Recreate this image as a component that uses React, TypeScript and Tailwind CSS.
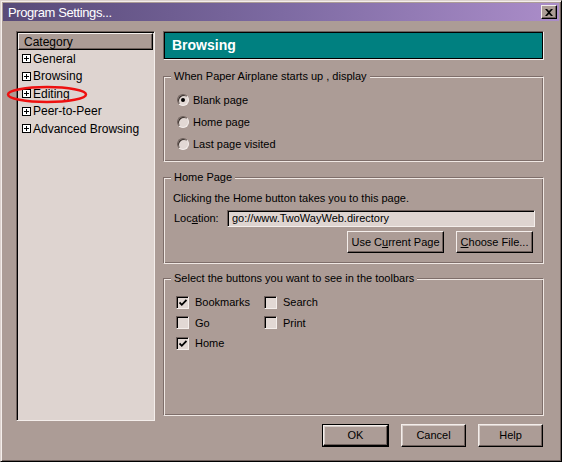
import * as React from 'react';

const FACE = 'bg-[#ac9c96]';

function Radio({ checked, label }: { checked?: boolean; label: string }) {
  return (
    <div className="flex items-center h-[22px]">
      <div className="relative w-[12px] h-[12px] rounded-full border border-t-[#6e605c] border-l-[#6e605c] border-r-[#f4eeeb] border-b-[#f4eeeb] bg-[#e2d8d4] shadow-[inset_1px_1px_0_#3a302c]">
        {checked && <div className="absolute left-[3px] top-[3px] w-[4px] h-[4px] rounded-full bg-black" />}
      </div>
      <span className="ml-[4px]">{label}</span>
    </div>
  );
}

function Check({ checked, label }: { checked?: boolean; label: string }) {
  return (
    <div className="flex items-center h-[20.5px]">
      <div className="relative w-[13px] h-[13px] border border-t-[#6e605c] border-l-[#6e605c] border-r-[#f4eeeb] border-b-[#f4eeeb] bg-[#e2d8d4] shadow-[inset_1px_1px_0_#000]">
        {checked && (
          <svg className="absolute left-[2px] top-[2px]" width="8" height="8" viewBox="0 0 8 8">
            <polyline points="0.5,3.5 2.8,5.8 7.5,1" fill="none" stroke="#000" strokeWidth="1.8" />
          </svg>
        )}
      </div>
      <span className="ml-[6px]">{label}</span>
    </div>
  );
}

function Btn({ children, w, isDefault }: { children: React.ReactNode; w: string; isDefault?: boolean }) {
  const inner = (
    <div
      className={`${w} h-full flex items-center justify-center border border-t-[#f4eeeb] border-l-[#f4eeeb] border-r-black border-b-black shadow-[inset_-1px_-1px_0_#6e605c,inset_1px_1px_0_#d6ccc8] ${FACE}`}
    >
      {children}
    </div>
  );
  if (isDefault) return <div className="h-[23px] border border-black">{inner}</div>;
  return <div className="h-[23px]">{inner}</div>;
}

function Group({ legend, className, children }: { legend: string; className: string; children: React.ReactNode }) {
  return (
    <div
      className={`relative border border-t-[#7e6e6a] border-l-[#7e6e6a] border-r-[#f0e8e4] border-b-[#f0e8e4] shadow-[inset_1px_1px_0_#f0e8e4,inset_-1px_-1px_0_#7e6e6a] ${className}`}
    >
      <span className={`absolute left-[7px] top-[-7px] px-[3px] leading-[13px] ${FACE}`}>{legend}</span>
      {children}
    </div>
  );
}

function Plus() {
  return (
    <div className="relative w-[9px] h-[9px] border border-black bg-white">
      <div className="absolute left-[1px] top-[3px] w-[5px] h-[1px] bg-black" />
      <div className="absolute left-[3px] top-[1px] w-[1px] h-[5px] bg-black" />
    </div>
  );
}

const categories = ['General', 'Browsing', 'Editing', 'Peer-to-Peer', 'Advanced Browsing'];

export default function App() {
  return (
    <div
      className={`relative w-[562px] h-[462px] overflow-hidden ${FACE} border border-t-[#dcd2ce] border-l-[#dcd2ce] border-r-black border-b-black shadow-[inset_1px_1px_0_#f4eeeb,inset_-1px_-1px_0_#6e605c] text-black`}
      style={{ fontFamily: '"Liberation Sans", Arial, sans-serif' }}
    >
      {/* Title bar */}
      <div className="mx-[2px] mt-[2px] h-[18px] flex items-center bg-gradient-to-r from-[#584a78] via-[#7d6aa2] to-[#ab8dc9]">
        <span className="pl-[5px] text-[13px] tracking-[-0.4px] text-white leading-none">Program Settings...</span>
        <div className="ml-auto mr-[2px] w-[16px] h-[14px] flex items-center justify-center border border-t-[#f4eeeb] border-l-[#f4eeeb] border-r-black border-b-black shadow-[inset_-1px_-1px_0_#6e605c] bg-[#ac9c96]">
          <svg width="8" height="7" viewBox="0 0 8 7">
            <path d="M0 0 L2 0 L4 2 L6 0 L8 0 L5 3.5 L8 7 L6 7 L4 5 L2 7 L0 7 L3 3.5 Z" fill="#000" />
          </svg>
        </div>
      </div>

      {/* Body */}
      <div className="flex pl-[15px] mt-[10px]">
        {/* Category list */}
        <div className="w-[139px] h-[390px] border border-t-[#6e605c] border-l-[#6e605c] border-r-[#f4eeeb] border-b-[#f4eeeb] bg-[#ded4d0] shadow-[inset_1px_1px_0_#000] pl-[1px] pt-[1px]">
          <div className="h-[17px] flex items-center pl-[5px] text-[12px] border border-t-[#f4eeeb] border-l-[#f4eeeb] border-r-black border-b-black shadow-[inset_-1px_-1px_0_#6e605c] bg-[#ac9c96] mr-[1px]">
            Category
          </div>
          <div className="pl-[4px] text-[12px]">
            {categories.map((c) => (
              <div key={c} className="flex items-center h-[17.5px]">
                <Plus />
                <span className="ml-[2px]">{c}</span>
              </div>
            ))}
          </div>
        </div>

        {/* Right panel */}
        <div className="ml-[8px] w-[381px] flex flex-col text-[11px]">
          <div className="h-[29px] flex items-center pl-[8px] border border-t-[#6e605c] border-l-[#6e605c] border-r-[#f4eeeb] border-b-[#f4eeeb] bg-[#008080] shadow-[inset_0_0_0_1px_#000] text-white text-[14px] font-bold">
            Browsing
          </div>

          <Group legend="When Paper Airplane starts up , display" className="mt-[16px] h-[86px] pt-[12px] pl-[13px]">
            <Radio checked label="Blank page" />
            <Radio label="Home page" />
            <Radio label="Last page visited" />
          </Group>

          <Group legend="Home Page" className="mt-[15px] h-[87px] pt-[14px] pl-[9px] pr-[9px]">
            <div className="leading-[13px]">Clicking the Home button takes you to this page.</div>
            <div className="flex items-center mt-[5px]">
              <span className="w-[54px] pl-[1px]">
                Loc<u>a</u>tion:
              </span>
              <div className="h-[17px] flex-1 mr-[-1px] flex items-center pl-[4px] border border-t-[#6e605c] border-l-[#6e605c] border-r-[#f4eeeb] border-b-[#f4eeeb] bg-[#ded4d0] shadow-[inset_1px_1px_0_#000]">
                go://www.TwoWayWeb.directory
              </div>
            </div>
            <div className="flex justify-end gap-[12px] mt-[4px] pr-[1px]">
              <div className="h-[22px] w-[97px] flex items-center justify-center border border-t-[#f4eeeb] border-l-[#f4eeeb] border-r-black border-b-black shadow-[inset_-1px_-1px_0_#6e605c]">
                Use C<u>u</u>rrent Page
              </div>
              <div className="h-[22px] w-[77px] flex items-center justify-center border border-t-[#f4eeeb] border-l-[#f4eeeb] border-r-black border-b-black shadow-[inset_-1px_-1px_0_#6e605c]">
                <u>C</u>hoose File...
              </div>
            </div>
          </Group>

          <Group legend="Select the buttons you want to see in the toolbars" className="mt-[14px] h-[138px] pt-[13px] pl-[12px]">
            <div className="grid grid-cols-[88px_auto]">
              <Check checked label="Bookmarks" />
              <Check label="Search" />
              <Check label="Go" />
              <Check label="Print" />
              <Check checked label="Home" />
            </div>
          </Group>

          <div className="flex justify-end gap-[12px] mt-[8px] mr-[1px]">
            <Btn w="w-[65px]" isDefault>OK</Btn>
            <Btn w="w-[65px]">Cancel</Btn>
            <Btn w="w-[65px]">Help</Btn>
          </div>
        </div>
      </div>

      {/* Red annotation ellipse */}
      <svg className="absolute left-[5px] top-[84px]" width="84" height="20" viewBox="0 0 84 20">
        <ellipse cx="41" cy="9.5" rx="39" ry="7.5" fill="none" stroke="#ee1010" strokeWidth="2.5" />
      </svg>
    </div>
  );
}
